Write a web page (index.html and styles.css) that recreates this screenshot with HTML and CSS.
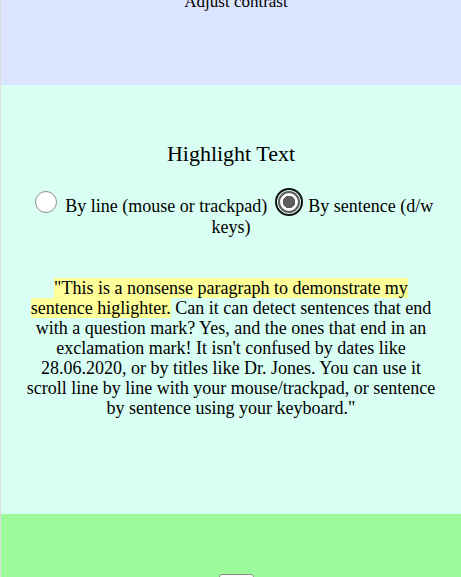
FILE: index.html
```html
<!DOCTYPE html>
<html lang="en">
<head>
<meta charset="utf-8">
<title>Highlight Text</title>
<link rel="stylesheet" href="styles.css">
</head>
<body>
<section class="contrast">
  <p class="contrast-label">Adjust contrast</p>
</section>
<section class="highlight">
  <h2 class="title">Highlight Text</h2>
  <div class="modes">
    <input class="radio" type="radio" name="mode" id="by-line"><label for="by-line"> By line (mouse or trackpad)</label>
    <input class="radio is-focused" type="radio" name="mode" id="by-sentence" checked><label for="by-sentence"> By sentence (d/w keys)</label>
  </div>
  <p class="demo"><span class="mark">"This is a nonsense paragraph to demonstrate my sentence higlighter.</span> Can it can detect sentences that end with a question mark? Yes, and the ones that end in an exclamation mark! It isn't confused by dates like 28.06.2020, or by titles like Dr. Jones. You can use it scroll line by line with your mouse/trackpad, or sentence by sentence using your keyboard."</p>
</section>
<section class="next">
  <div class="next-control"></div>
</section>
</body>
</html>
```
FILE: styles.css
```css
html, body {
  margin: 0;
  padding: 0;
}
body {
  font-family: "Liberation Serif", "Times New Roman", serif;
  color: #000;
  border-left: 1px solid #dddddd;
  overflow: hidden;
}
.contrast {
  background: #dce5ff;
  margin-top: -20px;
  height: 105px;
  padding-left: 10px;
  text-align: center;
}
.contrast-label {
  margin: 0;
  padding-top: 12px;
  font-size: 17px;
}
.highlight {
  background: #d9fff5;
  height: 429px;
  padding: 0 10px 0 10px;
  box-sizing: border-box;
  text-align: center;
}
.title {
  margin: 0;
  padding-top: 56px;
  font-size: 22px;
  font-weight: normal;
  line-height: 26px;
}
.modes {
  margin-top: 24px;
  font-size: 18px;
  line-height: 21px;
}
.radio {
  -webkit-appearance: none;
  appearance: none;
  width: 22px;
  height: 22px;
  margin: 0 4px 0 6px;
  box-sizing: border-box;
  border: 1.5px solid #8f8f8f;
  border-radius: 50%;
  background: #fff;
  vertical-align: -1px;
}
.radio:checked {
  border: 2px solid #5c5c5c;
  background: radial-gradient(circle, #5c5c5c 0 6px, #fff 6.5px);
}
.is-focused {
  outline: 2px solid #111;
  outline-offset: 1px;
  border-radius: 50%;
}
.demo {
  margin: 40px auto 0;
  max-width: 410px;
  font-size: 18px;
  line-height: 20px;
}
.mark {
  background: #ffff99;
}
.next {
  background: #9cfa9a;
  height: 80px;
  display: flex;
  justify-content: center;
  align-items: flex-start;
  padding: 60px 0 0 10px;
}
.next-control {
  width: 33px;
  height: 24px;
  background: #fff;
  border: 1px solid #8a8a8a;
  border-radius: 3px;
}
```
